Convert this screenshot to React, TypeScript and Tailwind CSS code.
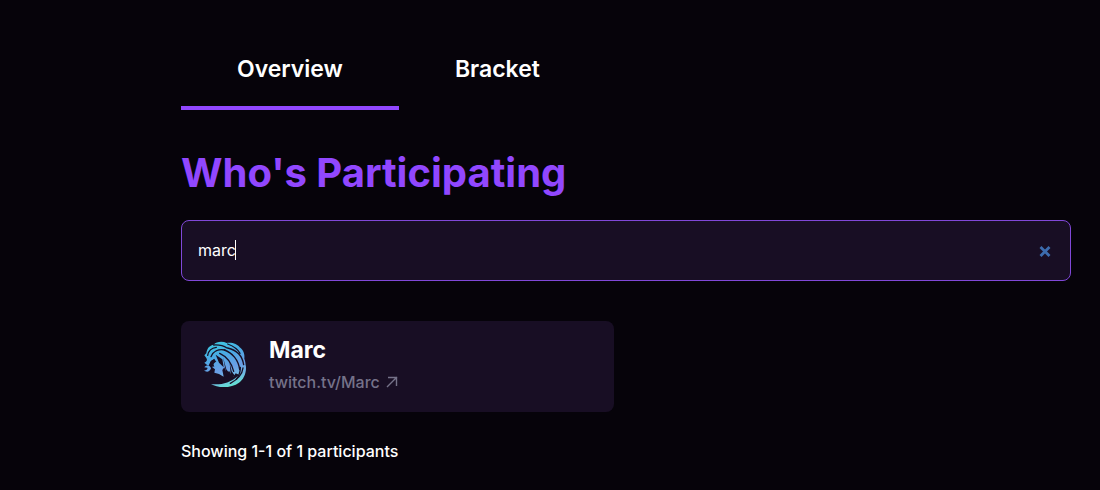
import { useState } from 'react'
import { clsx } from 'clsx'

// ─── Data ─────────────────────────────────────────────────────────────────────

const TABS = ['Overview', 'Bracket']

interface Participant {
  name: string
  url: string
}

const PARTICIPANTS: Participant[] = [{ name: 'Marc', url: 'twitch.tv/Marc' }]

// ─── Icons ────────────────────────────────────────────────────────────────────

function ManeLogo() {
  return (
    <svg viewBox="26 16 132 144" className="h-12 w-11 shrink-0" aria-hidden="true">
      <defs>
        <linearGradient id="mane" x1="60" y1="20" x2="105" y2="160" gradientUnits="userSpaceOnUse">
          <stop offset="0" stopColor="#3cc9e0" />
          <stop offset="0.3" stopColor="#4aaae4" />
          <stop offset="0.6" stopColor="#6a9ee6" />
          <stop offset="0.8" stopColor="#70b8e2" />
          <stop offset="1" stopColor="#62e8d0" />
        </linearGradient>
      </defs>
      {/* Hair mass with a ragged left edge */}
      <path
        fill="url(#mane)"
        d="M36 70L30 62L36 56C38 40 46 32 58 30C66 21 84 19 97 25C112 22 130 28 136 38C147 46 152 58 150 72C156 88 155 104 149 116C144 136 126 148 104 154C120 144 130 134 134 120L124 116L116 128L104 108L98 118L90 98L84 106L88 126L74 118L60 114L62 104L54 98L58 86L62 72L50 78L42 94L30 84C38 80 40 76 36 70Z"
      />
      {/* Chin curl and bottom sweep */}
      <path
        fill="url(#mane)"
        d="M30 98C36 88 48 92 50 101C46 113 36 114 28 107C36 108 41 103 39 99ZM50 148C78 152 108 144 128 126C142 112 150 104 154 90C158 112 149 133 134 144C112 161 70 161 50 148Z"
      />
      {/* Gaps between the strands */}
      <g fill="none" stroke="#180e24" strokeLinecap="round" strokeWidth="4">
        <path d="M40 62C42 50 52 40 66 38" />
        <path d="M50 66C56 50 72 42 92 46" />
        <path d="M58 31C72 30 86 32 98 40" />
        <path d="M100 28C116 34 130 42 137 56" />
        <path d="M90 46C114 54 132 76 136 104" />
        <path d="M100 40C126 46 144 64 148 90" />
        <path d="M76 56C98 66 112 86 118 110" />
        <path d="M146 100C144 118 134 132 108 146" />
        <path d="M138 98C138 114 134 124 126 134" />
      </g>
      <g fill="#180e24">
        <path d="M64 60L74 84L88 98L84 74Z" />
        <path d="M48 82L58 74L66 80L57 88L60 96L48 94Z" />
        <path d="M86 68L96 104L104 114L102 126L86 108L94 108Z" />
        <path d="M106 84L112 110L122 124L110 130Z" />
      </g>
    </svg>
  )
}

function ClearIcon() {
  return (
    <svg viewBox="0 0 12 12" className="size-3" fill="none" stroke="#3c6cae" strokeWidth="2.8" aria-hidden="true">
      <path d="M1.5 2L10.5 11M10.5 2L1.5 11" />
    </svg>
  )
}

function ArrowIcon() {
  return (
    <svg viewBox="0 0 12 12" className="size-3" fill="none" stroke="currentColor" strokeWidth="1.4" aria-hidden="true">
      <path d="M1 11L11 1M2 1.5H10.5V10" />
    </svg>
  )
}

// ─── Participant card ─────────────────────────────────────────────────────────

function ParticipantCard({ name, url }: Participant) {
  return (
    <li className="flex items-center gap-[22px] rounded-lg bg-[#180e24] px-[22px] pt-[11px] pb-4">
      <ManeLogo />
      <div>
        <h2 className="text-[23px] leading-9 font-bold">{name}</h2>
        <a
          href={`https://${url}`}
          className="flex items-center gap-1.5 text-base leading-7 font-medium text-[#757289]"
        >
          {url}
          <ArrowIcon />
        </a>
      </div>
    </li>
  )
}

// ─── Page ─────────────────────────────────────────────────────────────────────

export default function App() {
  const [tab, setTab] = useState('Overview')
  const [query, setQuery] = useState('marc')

  const shown = PARTICIPANTS.filter((p) => p.name.toLowerCase().includes(query.toLowerCase()))

  return (
    <main className="min-h-screen bg-[#06030a] pt-8 pr-[29px] pb-6 pl-[181px] font-['Inter',sans-serif] text-white">
      <nav className="flex">
        {TABS.map((label) => (
          <button
            key={label}
            type="button"
            onClick={() => setTab(label)}
            className={clsx(
              'border-b-4 px-14 pt-5 pb-5 text-[23px] leading-[34px] font-semibold',
              tab === label ? 'border-[#9147ff]' : 'border-transparent',
            )}
          >
            {label}
          </button>
        ))}
      </nav>

      <h1 className="mt-9 text-[40px] leading-[54px] font-bold text-[#9147ff]">Who's Participating</h1>

      <div className="relative mt-5">
        <input
          type="text"
          aria-label="Search participants"
          value={query}
          onChange={(e) => setQuery(e.target.value)}
          className="peer h-[61px] w-full rounded-lg border border-[#8048d8] bg-[#180e24] pr-12 pb-0.5 pl-4 text-base outline-none"
        />
        {/* Resting caret, replaced by the real one on focus */}
        <span className="absolute top-5 left-[54px] h-5 w-px bg-white peer-focus:hidden" />
        <button
          type="button"
          aria-label="Clear search"
          onClick={() => setQuery('')}
          className="absolute inset-y-0 right-5 flex items-center"
        >
          <ClearIcon />
        </button>
      </div>

      <ul className="mt-10 grid grid-cols-2 gap-6">
        {shown.map((p) => (
          <ParticipantCard key={p.name} {...p} />
        ))}
      </ul>

      <p className="mt-7 text-base leading-[22px] font-medium">
        Showing 1-{shown.length} of {shown.length} participants
      </p>
    </main>
  )
}
